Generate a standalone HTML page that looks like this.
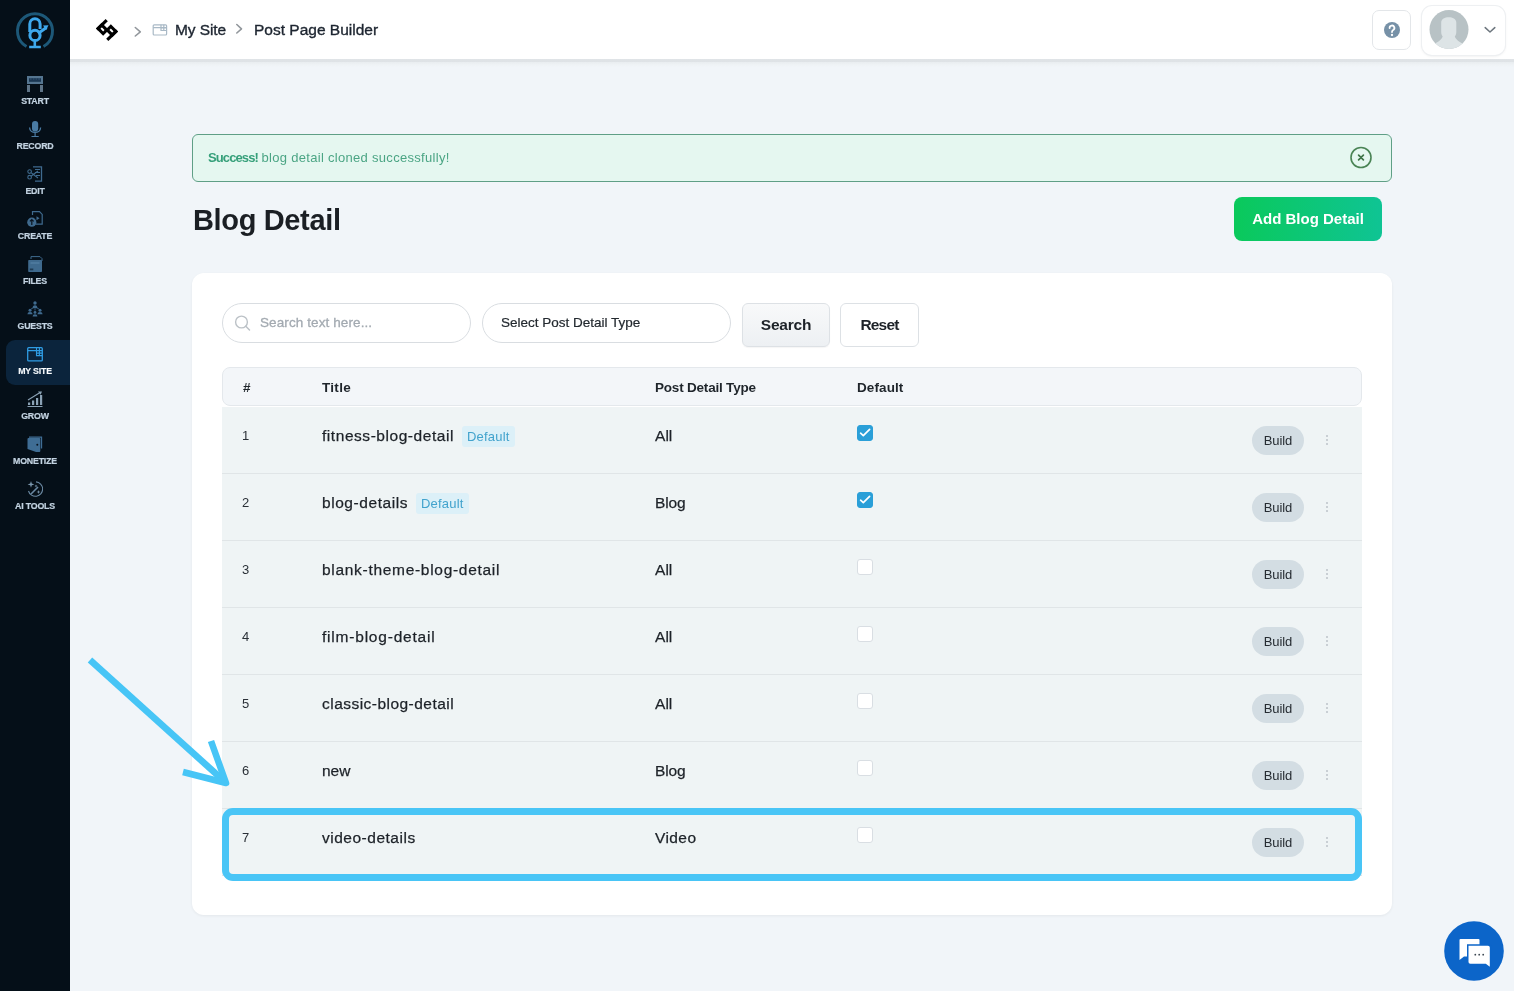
<!DOCTYPE html>
<html><head><meta charset="utf-8">
<style>
*{box-sizing:border-box;margin:0;padding:0}
html,body{width:1514px;height:991px;overflow:hidden}
body>*{will-change:transform}
body{background:#f1f5f9;font-family:"Liberation Sans",sans-serif;color:#1e2329;position:relative}
#side{position:absolute;left:0;top:0;width:70px;height:991px;background:#050f18}
#mysite{position:absolute;left:6px;top:340px;width:64px;height:45px;background:#0b243c;border-radius:9px 0 0 9px}
.lbl{position:absolute;left:0;width:70px;text-align:center;font-size:8.8px;font-weight:bold;color:#c3d3e1;line-height:10px;letter-spacing:-0.2px;-webkit-text-stroke:0.2px #c3d3e1}
.ico{position:absolute;left:27px;width:16px;height:16px}
#hdr{position:absolute;left:70px;top:0;width:1444px;height:59px;background:#fff}
#hdrline{position:absolute;left:70px;top:59px;width:1444px;height:8px;background:linear-gradient(#e0e4e7 0,#dee2e6 35%,#e9edf0 40%,#eef2f5 70%,#f1f5f9 100%)}
.crumb{position:absolute;top:21px;font-size:15.5px;color:#1d2530;line-height:18px;white-space:nowrap;-webkit-text-stroke:0.35px #1d2530}
#help{position:absolute;left:1372px;top:10px;width:39px;height:40px;border:1px solid #e3e6e9;border-radius:7px;background:#fff}
#prof{position:absolute;left:1422px;top:6px;width:83px;height:49px;border-radius:10px;background:#fff;box-shadow:0 0 0 1px #eef0f2,0 1px 3px rgba(0,0,0,.10)}
#alert{position:absolute;left:192px;top:134px;width:1200px;height:48px;border:1px solid #5f9f86;border-radius:6px;background:#e5f7f0}
#alert .t{position:absolute;left:15px;top:15px;font-size:13px;color:#4ba584;line-height:16px;white-space:nowrap}
#alert .t b{color:#36a07a;letter-spacing:-0.9px}
h1{position:absolute;left:193px;top:203px;font-size:29px;font-weight:bold;color:#1b1f24;line-height:34px;letter-spacing:-0.35px;white-space:nowrap}
#addbtn{position:absolute;left:1234px;top:197px;width:148px;height:44px;border-radius:8px;background:linear-gradient(90deg,#0ac95b,#0fc494);color:#fff;font-weight:bold;font-size:15px;line-height:44px;text-align:center;white-space:nowrap}
#card{position:absolute;left:192px;top:273px;width:1200px;height:642px;background:#fff;border-radius:12px;box-shadow:0 1px 3px rgba(0,0,0,.06)}
.inp{position:absolute;top:303px;width:249px;height:40px;border:1px solid #d9dde1;border-radius:20px;background:#fff;font-size:13.5px;line-height:38px;white-space:nowrap}
.btn{position:absolute;top:303px;height:44px;border:1px solid #dde1e5;border-radius:6px;font-size:15.5px;font-weight:bold;line-height:42px;text-align:center;color:#1d2228;white-space:nowrap}
#thead{position:absolute;left:222px;top:367px;width:1140px;height:39px;background:#f3f6f9;border:1px solid #e4e8ec;border-radius:8px}
.th{position:absolute;top:380px;font-size:13.5px;font-weight:bold;color:#1f252b;line-height:16px;white-space:nowrap}
.row{position:absolute;left:222px;width:1140px;height:67px;background:#eff4f5;border-bottom:1px solid #e0e5e7}
.num{position:absolute;left:20px;top:20.5px;font-size:13px;color:#2a3037;line-height:16px}
.ttl{position:absolute;left:100px;top:17px;height:24px;line-height:24px;font-size:15.5px;color:#1d2228;-webkit-text-stroke:0.25px #1d2228;white-space:nowrap;display:flex;align-items:center}
.tt{letter-spacing:0.6px}
.typ{position:absolute;left:433px;top:20px;font-size:15.5px;color:#1d2228;line-height:18px;-webkit-text-stroke:0.25px #1d2228}
.chk{position:absolute;left:635px;top:18px;width:16px;height:16px;border-radius:3px;border:1px solid #d9dee3;background:#fff}
.chk.on{background:#2a9fd8;border-color:#2a9fd8}
.bld{position:absolute;left:1030px;top:19px;width:52px;height:29px;border-radius:15px;background:#d3dde3;font-size:13px;line-height:29px;text-align:center;color:#262c32;letter-spacing:-0.1px}
.keb{position:absolute;left:1104px;top:28px;width:2px;height:12px}
.keb i{display:block;width:2px;height:2px;border-radius:1px;background:#bcc3c9;margin-bottom:2px}
.badge{display:inline-block;-webkit-text-stroke:0;margin-left:8px;height:21px;padding:0 5px;border-radius:3px;background:#dcf0f8;color:#42a3cd;font-size:13px;line-height:21px;letter-spacing:0.2px}
#hl{position:absolute;left:222px;top:807.5px;width:1140px;height:72.5px;border:7.3px solid #49c5f6;border-radius:11px}


</style></head><body>
<div id="side"></div>
<div id="mysite"></div>
<svg style="position:absolute;left:12px;top:7px" width="46" height="46" viewBox="0 0 46 46">
 <path d="M14.5 39.5 A17.5 17.5 0 1 1 31.5 39.5" stroke="#1d5878" stroke-width="3" fill="none"/>
 <path d="M17.8 25 V17 A5.15 5.15 0 0 1 28.1 17 V22" stroke="#3ea8ec" stroke-width="3" fill="none"/>
 <circle cx="23" cy="28.4" r="5.1" stroke="#3ea8ec" stroke-width="3" fill="none"/>
 <path d="M26 26.5 L34.5 20.5" stroke="#3ea8ec" stroke-width="3" fill="none"/>
 <path d="M31 18.5 L36.5 18.2 L34.2 23z" fill="#3ea8ec"/>
 <path d="M22.8 33.5 V39 M17.2 40 H28.8" stroke="#3ea8ec" stroke-width="2.6" fill="none"/>
</svg>
<!-- START -->
<svg class="ico" style="top:76px" viewBox="0 0 16 16">
 <rect x="0" y="0" width="16" height="8" fill="#557590"/>
 <rect x="2" y="2.2" width="12" height="3.6" fill="#1a3652"/>
 <path d="M3 3 H4.6 M6 3 H7.4 M8.6 3 H10 M11.2 3 H13" stroke="#3f6080" stroke-width="0.8"/>
 <rect x="0" y="9" width="3" height="7" fill="#5f7487"/>
 <rect x="13" y="9" width="3" height="7" fill="#5f7487"/>
</svg>
<!-- RECORD -->
<svg class="ico" style="top:121px" viewBox="0 0 16 16">
 <rect x="5" y="0" width="6.2" height="10.5" rx="3.1" fill="#4a7ba3"/>
 <path d="M2.6 6.5 C2.6 13 13.6 13 13.6 6.5" stroke="#4a7ba3" stroke-width="1.3" fill="none"/>
 <path d="M8.1 11.5 V15 M4.5 15.6 H11.7" stroke="#4a7ba3" stroke-width="1.2"/>
</svg>
<!-- EDIT -->
<svg class="ico" style="top:166px" viewBox="0 0 16 16">
 <path d="M6 0.8 H14.5 V15.2 H8" stroke="#3f6a8e" stroke-width="1.3" fill="none"/>
 <path d="M8 3.5 H13 M8 6.5 H13 M9 9.5 H13" stroke="#3f6a8e" stroke-width="1.1"/>
 <circle cx="2.6" cy="5.6" r="1.8" stroke="#3f6a8e" stroke-width="1.1" fill="none"/>
 <circle cx="2.6" cy="11.2" r="1.8" stroke="#3f6a8e" stroke-width="1.1" fill="none"/>
 <path d="M4 6.6 L11 12 M4 10.2 L11 5" stroke="#3f6a8e" stroke-width="1.1"/>
</svg>
<!-- CREATE -->
<svg class="ico" style="top:211px" viewBox="0 0 16 16">
 <path d="M5.5 4 V0.7 H12.5 L15.2 3.4 V13.2 H8.5" stroke="#3f6a8e" stroke-width="1.2" fill="none"/>
 <path d="M9.5 5.2 L12.5 7.2 L9.5 9.2 Z" fill="#3f6a8e"/>
 <circle cx="4.8" cy="11.2" r="4.6" fill="#3f6a8e"/>
 <path d="M4.8 14 V8.6 M2.9 10.4 L4.8 8.5 L6.7 10.4" stroke="#0a1420" stroke-width="1.2" fill="none"/>
</svg>
<!-- FILES -->
<svg class="ico" style="top:256px" viewBox="0 0 16 16">
 <path d="M4 3 V0.6 H13 L15 2.6 V5" stroke="#3f6a8e" stroke-width="1" fill="none"/>
 <rect x="1.2" y="4" width="13.8" height="12" rx="0.8" fill="#3f6a8e"/>
 <path d="M3.5 7 H12.5" stroke="#5a86aa" stroke-width="1"/>
 <rect x="2.8" y="12.5" width="3.5" height="1.8" fill="#1f3a52"/>
</svg>
<!-- GUESTS -->
<svg class="ico" style="top:301px" viewBox="0 0 16 16" fill="#3f6a8e">
 <circle cx="8" cy="2" r="1.7"/>
 <path d="M5.6 7.2 Q5.6 4.2 8 4.2 Q10.4 4.2 10.4 7.2 Z"/>
 <circle cx="3" cy="9.3" r="1.5"/>
 <path d="M0.4 13.2 Q0.4 11 3 11 Q5.6 11 5.6 13.2 Z"/>
 <circle cx="13" cy="9.3" r="1.5"/>
 <path d="M10.4 13.2 Q10.4 11 13 11 Q15.6 11 15.6 13.2 Z"/>
 <circle cx="8" cy="11.4" r="1.4"/>
 <path d="M5.6 15.6 Q5.6 13.2 8 13.2 Q10.4 13.2 10.4 15.6 Z"/>
 <path d="M8 7.5 V9.5 M4 8 L6 7 M12 8 L10 7" stroke="#3f6a8e" stroke-width="0.8"/>
</svg>
<!-- MY SITE -->
<svg class="ico" style="top:347px" viewBox="0 0 16 16">
 <rect x="0.7" y="0.7" width="14.6" height="13.2" rx="1" stroke="#2f9ce3" stroke-width="1.3" fill="none"/>
 <path d="M0.7 3.6 H15.3 M9.5 0.7 V8.6 H15.3 M12.4 0.7 V8.6 M9.5 6.1 H15.3" stroke="#2f9ce3" stroke-width="1.1" fill="none"/>
</svg>
<!-- GROW -->
<svg class="ico" style="top:391px" viewBox="0 0 16 16">
 <rect x="1" y="11.5" width="2.2" height="2.5" fill="#8aa1b4"/>
 <rect x="5" y="9.5" width="2.2" height="4.5" fill="#8aa1b4"/>
 <rect x="9" y="7" width="2.2" height="7" fill="#8aa1b4"/>
 <rect x="13" y="4" width="2.2" height="10" fill="#8aa1b4"/>
 <path d="M0.5 15.5 H15.5" stroke="#8aa1b4" stroke-width="1"/>
 <path d="M1 9 L13.5 1.2" stroke="#8aa1b4" stroke-width="1.1"/>
 <path d="M11 0.6 L15 0.4 L13.6 3.8 Z" fill="#8aa1b4"/>
</svg>
<!-- MONETIZE -->
<svg class="ico" style="top:436px" viewBox="0 0 16 16">
 <path d="M2 1.2 H14.5 V12.5" stroke="#3f6d94" stroke-width="1.3" fill="none"/>
 <path d="M0.5 3 Q0.5 2 1.5 2 H12.5 Q13.3 2 13.3 3 V15 Q13.3 16 12.5 16 H9 L0.5 13 Z" fill="#3f6d94"/>
 <circle cx="10.3" cy="8.8" r="1" fill="#0a1420"/>
</svg>
<!-- AI TOOLS -->
<svg class="ico" style="top:481px" viewBox="0 0 16 16">
 <path d="M9 0.9 A7.2 7.2 0 1 1 1.5 10" stroke="#6a88a2" stroke-width="1.1" fill="none"/>
 <path d="M4 0 L4.8 2.6 L7.4 3.4 L4.8 4.2 L4 6.8 L3.2 4.2 L0.6 3.4 L3.2 2.6 Z" fill="#7a96ad"/>
 <path d="M4 13 L11 6" stroke="#6a88a2" stroke-width="1.6"/>
 <path d="M11.5 9 L12 10.5 L13.5 11 L12 11.5 L11.5 13 L11 11.5 L9.5 11 L11 10.5 Z" fill="#7a96ad"/>
 <path d="M9 3.5 L9.4 4.6 L10.5 5 L9.4 5.4 L9 6.5 L8.6 5.4 L7.5 5 L8.6 4.6 Z" fill="#7a96ad"/>
</svg>
<div class="lbl" style="top:96px">START</div>
<div class="lbl" style="top:141px">RECORD</div>
<div class="lbl" style="top:186px">EDIT</div>
<div class="lbl" style="top:231px">CREATE</div>
<div class="lbl" style="top:276px">FILES</div>
<div class="lbl" style="top:321px">GUESTS</div>
<div class="lbl" style="top:366px;color:#fff">MY SITE</div>
<div class="lbl" style="top:411px">GROW</div>
<div class="lbl" style="top:456px">MONETIZE</div>
<div class="lbl" style="top:501px">AI TOOLS</div>

<div id="hdr"></div>
<div id="hdrline"></div>
<svg style="position:absolute;left:0;top:0" width="180" height="59" viewBox="0 0 180 59">
 <g transform="translate(107,30) rotate(45) translate(-8.8,-6.85)" fill="#000">
  <rect x="0" y="0" width="3.1" height="13.7"/>
  <rect x="14.5" y="0" width="3.1" height="13.7"/>
  <rect x="1.55" y="7.05" width="7.1" height="5.1" fill="none" stroke="#000" stroke-width="3.1"/>
  <rect x="8.95" y="1.55" width="7.1" height="5.1" fill="none" stroke="#000" stroke-width="3.1"/>
 </g>
 <path d="M135.3 27.5 L140.3 31.8 L135.3 36" stroke="#92979c" stroke-width="1.6" fill="none" stroke-linecap="round" stroke-linejoin="round"/>
 <g stroke="#a9b9c6" stroke-width="1.2" fill="none">
  <rect x="153.2" y="24.8" width="13.4" height="10.2" rx="1"/>
  <path d="M153.2 27.6 H166.6 M161 24.8 V30.5 H166.6 M163.8 24.8 V30.5 M161 28 H166.6"/>
 </g>
</svg>
<svg style="position:absolute;left:230px;top:18.5px" width="16" height="20" viewBox="0 0 16 20">
 <path d="M6.8 5.5 L11.5 9.8 L6.8 14" stroke="#92979c" stroke-width="1.6" fill="none" stroke-linecap="round" stroke-linejoin="round"/>
</svg>
<div class="crumb" style="left:175px;letter-spacing:-0.1px">My Site</div>
<div class="crumb" style="left:254px">Post Page Builder</div>
<div id="help"></div>
<svg style="position:absolute;left:1382px;top:20px" width="20" height="20" viewBox="0 0 20 20">
 <circle cx="10" cy="10" r="8" fill="#7791a7"/>
 <path d="M7.6 8 A2.4 2.4 0 1 1 11.2 10 C10.2 10.6 10 11 10 12" stroke="#fff" stroke-width="1.8" fill="none" stroke-linecap="round"/>
 <circle cx="10" cy="15" r="1.15" fill="#fff"/>
</svg>
<div id="prof"></div>
<svg style="position:absolute;left:1429px;top:10px" width="40" height="40" viewBox="0 0 40 40">
 <defs><clipPath id="av"><circle cx="20" cy="19.5" r="19.5"/></clipPath></defs>
 <circle cx="20" cy="19.5" r="19.5" fill="#b8c2c5"/>
 <g clip-path="url(#av)" fill="#dde4e6">
  <path d="M12.2 12.5 C12.2 5.5 27.3 5.5 27.3 12.5 L27.3 22 C27.3 24.5 26.5 25.5 25.8 26.5 C27.5 30.5 30.5 32 34.5 33.8 L34.5 40 L5 40 L5 33.8 C9 32 12 30.5 13.7 26.5 C13 25.5 12.2 24.5 12.2 22 Z"/>
 </g>
</svg>
<svg style="position:absolute;left:1482px;top:24px" width="16" height="12" viewBox="0 0 16 12">
 <path d="M3.2 3.6 L8 8 L12.8 3.6" stroke="#6d767e" stroke-width="1.5" fill="none" stroke-linecap="round" stroke-linejoin="round"/>
</svg>

<div id="alert"><div class="t"><b>Success!</b> <span style="letter-spacing:0.3px">blog detail cloned successfully!</span></div></div>
<svg style="position:absolute;left:1349px;top:146px" width="24" height="24" viewBox="0 0 24 24">
 <circle cx="12" cy="11.5" r="10" stroke="#4a8455" stroke-width="1.6" fill="none"/>
 <path d="M9.6 9.1 L14.4 13.9 M14.4 9.1 L9.6 13.9" stroke="#3f7548" stroke-width="1.7" stroke-linecap="round"/>
</svg>
<h1>Blog Detail</h1>
<div id="addbtn">Add Blog Detail</div>

<div id="card"></div>
<div class="inp" style="left:222px"><span style="position:absolute;left:37px;color:#a3aab1;letter-spacing:0.1px;-webkit-text-stroke:0.3px #a3aab1">Search text here...</span></div>
<svg style="position:absolute;left:232px;top:312px" width="22" height="22" viewBox="0 0 22 22">
 <circle cx="9.5" cy="10" r="5.9" stroke="#bcc2c7" stroke-width="1.4" fill="none"/>
 <path d="M13.8 14.3 L17.5 18" stroke="#bcc2c7" stroke-width="1.5" stroke-linecap="round"/>
</svg>
<div class="inp" style="left:482px"><span style="position:absolute;left:18px;color:#23292f;-webkit-text-stroke:0.2px #23292f">Select Post Detail Type</span></div>
<div class="btn" style="left:742px;width:88px;background:linear-gradient(#f8f9fa,#edf0f3);letter-spacing:-0.2px;box-shadow:0 1px 1px rgba(0,0,0,.04)">Search</div>
<div class="btn" style="left:840px;width:79px;background:#fff;letter-spacing:-0.8px">Reset</div>

<div id="thead"></div>
<div class="th" style="left:243px">#</div>
<div class="th" style="left:322px;letter-spacing:0.3px">Title</div>
<div class="th" style="left:655px;letter-spacing:-0.2px">Post Detail Type</div>
<div class="th" style="left:857px;letter-spacing:0.1px">Default</div>

<div class="row" style="top:407px"><div class="num">1</div><div class="ttl"><span class="tt" style="letter-spacing:0.55px">fitness-blog-detail</span><span class="badge">Default</span></div><div class="typ" style="letter-spacing:0.04px">All</div><div class="chk on"><svg width="16" height="16" viewBox="0 0 16 16" style="position:absolute;left:-1px;top:-1px"><path d="M3.6 8.2 L6.3 10.6 L12.6 4.3" stroke="#fff" stroke-width="1.7" fill="none" stroke-linecap="round" stroke-linejoin="round"/></svg></div><div class="bld">Build</div><div class="keb"><i></i><i></i><i></i></div></div>
<div class="row" style="top:474px"><div class="num">2</div><div class="ttl"><span class="tt" style="letter-spacing:0.56px">blog-details</span><span class="badge">Default</span></div><div class="typ" style="letter-spacing:-0.17px">Blog</div><div class="chk on"><svg width="16" height="16" viewBox="0 0 16 16" style="position:absolute;left:-1px;top:-1px"><path d="M3.6 8.2 L6.3 10.6 L12.6 4.3" stroke="#fff" stroke-width="1.7" fill="none" stroke-linecap="round" stroke-linejoin="round"/></svg></div><div class="bld">Build</div><div class="keb"><i></i><i></i><i></i></div></div>
<div class="row" style="top:541px"><div class="num">3</div><div class="ttl"><span class="tt" style="letter-spacing:0.7px">blank-theme-blog-detail</span></div><div class="typ" style="letter-spacing:0.04px">All</div><div class="chk"></div><div class="bld">Build</div><div class="keb"><i></i><i></i><i></i></div></div>
<div class="row" style="top:608px"><div class="num">4</div><div class="ttl"><span class="tt" style="letter-spacing:0.79px">film-blog-detail</span></div><div class="typ" style="letter-spacing:0.04px">All</div><div class="chk"></div><div class="bld">Build</div><div class="keb"><i></i><i></i><i></i></div></div>
<div class="row" style="top:675px"><div class="num">5</div><div class="ttl"><span class="tt" style="letter-spacing:0.47px">classic-blog-detail</span></div><div class="typ" style="letter-spacing:0.04px">All</div><div class="chk"></div><div class="bld">Build</div><div class="keb"><i></i><i></i><i></i></div></div>
<div class="row" style="top:742px"><div class="num">6</div><div class="ttl"><span class="tt" style="letter-spacing:0px">new</span></div><div class="typ" style="letter-spacing:-0.17px">Blog</div><div class="chk"></div><div class="bld">Build</div><div class="keb"><i></i><i></i><i></i></div></div>
<div class="row" style="top:809px"><div class="num">7</div><div class="ttl"><span class="tt" style="letter-spacing:0.51px">video-details</span></div><div class="typ" style="letter-spacing:0.41px">Video</div><div class="chk"></div><div class="bld">Build</div><div class="keb"><i></i><i></i><i></i></div></div>
<div id="hl"></div>
<svg style="position:absolute;left:70px;top:640px" width="180" height="160" viewBox="70 640 180 160">
 <g stroke="#47c5f6" stroke-width="6.6" fill="none" stroke-linejoin="round">
  <path d="M90 660 L224 781"/>
  <path d="M211 741 L226 783 L183 772"/>
 </g>
</svg>
<svg style="position:absolute;left:1444px;top:921px" width="60" height="60" viewBox="0 0 60 60">
 <circle cx="30" cy="30" r="29.8" fill="#0c65c9"/>
 <path d="M15.5 19 Q15.5 18 16.5 18 H34.5 Q35.5 18 35.5 19 V34.5 Q35.5 35.5 34.5 35.5 H20 L15.5 39 Z" fill="#fff"/>
 <path d="M23 23.3 H45.3 Q47.3 23.3 47.3 25.3 V48 L42.3 44.2 H25 Q23 44.2 23 42.2 Z" fill="#0c65c9"/>
 <path d="M24.5 24.8 H44 Q45.8 24.8 45.8 26.6 V45.8 L41.8 42.7 H26.3 Q24.5 42.7 24.5 40.9 Z" fill="#fff"/>
 <circle cx="31.3" cy="33.7" r="0.9" fill="#3a4550"/>
 <circle cx="35.2" cy="33.7" r="0.9" fill="#3a4550"/>
 <circle cx="39.2" cy="33.7" r="0.9" fill="#3a4550"/>
</svg>

</body></html>
